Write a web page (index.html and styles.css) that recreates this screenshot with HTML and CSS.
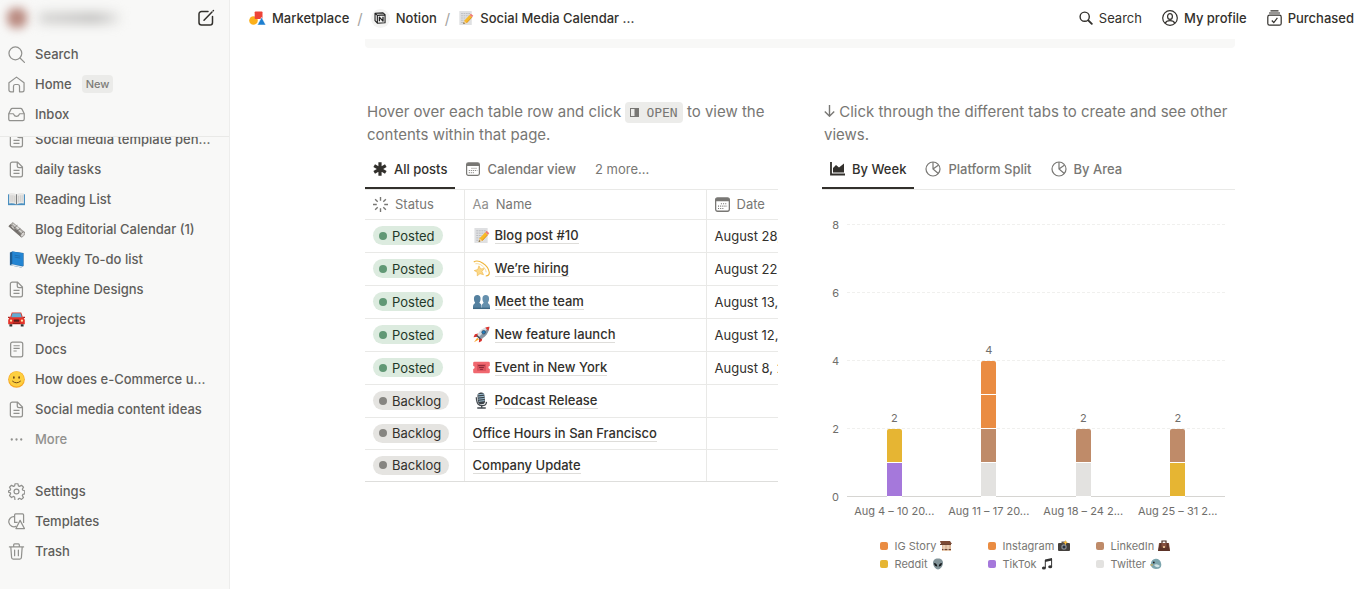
FILE: index.html
```html
<!DOCTYPE html>
<html lang="en">
  <head>
    <meta charset="utf-8" />
    <meta name="viewport" content="width=device-width, initial-scale=1" />
    <title>Social Media Calendar</title>
    <link rel="stylesheet" href="styles.css" />
  </head>
  <body>
    <!-- icon sprite -->
    <svg class="sprite" aria-hidden="true">
      <symbol id="page" viewBox="0 0 18 18">
        <path d="M4.500 1.200h5.600l5.200 5.200v8.400a2 2 0 0 1-2 2H4.500a2 2 0 0 1-2-2V3.200a2 2 0 0 1 2-2zM9.800 1.400v3.500a2 2 0 0 0 2 2h3.400M5.800 10h6.400M5.800 13h6.400" fill="none" stroke="currentColor" stroke-width="1.300" />
      </symbol>
      <symbol id="doc" viewBox="0 0 18 18">
        <rect x="2.800" y="1.200" width="12.800" height="15.600" rx="2" fill="none" stroke="currentColor" stroke-width="1.300" />
        <path d="M5.800 5h6.600M5.800 7.800h6.600M5.800 10.600h3.400" stroke="currentColor" stroke-width="1.100" />
      </symbol>
      <symbol id="memo" viewBox="0 0 18 18">
        <rect x="1.500" y="1" width="14" height="16" rx=".6" fill="#dfe0e2" />
        <path d="M3.500 4h10M3.500 6.500h9M3.500 9h6M3.500 11.500h5M3.500 14h4" stroke="#b4b6ba" stroke-width=".9" stroke-dasharray="2 .7" />
        <path d="M6 15.600l1-3.600 6-6.400 2.700 2.500-6 6.400z" fill="#f7b928" />
        <path d="M9.700 14.500l6-6.400" stroke="#d9860f" stroke-width=".9" />
        <path d="M13 5.600l1.500-1.500 2.700 2.500-1.500 1.500z" fill="#ef7b74" />
        <path d="M6 15.600l1-3.600 2.700 2.500z" fill="#f2cf9c" />
        <path d="M6 15.600l.5-1.700 1.200 1.200z" fill="#333" />
      </symbol>
      <symbol id="book-open" viewBox="0 0 18 18">
        <path d="M0 3.500h18V15H0z" fill="#4a8fc0" />
        <path d="M1.200 2.500q4-1 7.800 1 3.800-2 7.800-1v10.800q-4-.8-7.800 1-3.800-1.800-7.800-1z" fill="#e9e8e6" />
        <path d="M9 3.500v10.800" stroke="#777" />
        <path d="M3.200 4.500v7M5.200 4.500v7M7.200 5v7M11 5v7M13 4.500v7M15 4.500v7" stroke="#c6c5c2" stroke-width=".8" />
      </symbol>
      <symbol id="news" viewBox="0 0 18 18">
        <path d="M.5 5.500L5 1 17.500 11.500 14 17.300z" fill="#a5a29e" />
        <path d="M.5 5.500L14 17.300l-.4-4L2.500 3.500z" fill="#77736f" />
        <path d="M5 3l9.500 9M3.800 5.500l3 3M8 5l4 3.700" stroke="#dcdad7" stroke-width="1.100" />
        <path d="M6 8l4-3.500M9 11l4-3" stroke="#5d5a57" stroke-width=".8" />
        <ellipse cx="15.500" cy="14.300" rx="1.600" ry="3.200" transform="rotate(35 15.500 14.300)" fill="#d8d5d2" stroke="#7b7773" stroke-width=".7" />
      </symbol>
      <symbol id="book" viewBox="0 0 18 18">
        <path d="M2 1.500L4.500.5l12 1.500v14L14 17.500 2 15z" fill="#1c5d94" />
        <path d="M4.500.5L16 2.500V16L4.500 14z" fill="#2385d3" />
        <path d="M2 15l2.500-1L16 16.300l-2 1.200z" fill="#dce6ee" />
        <path d="M7 4.500l6 1M7 6.500l6 1" stroke="#1b67a7" stroke-width=".8" />
      </symbol>
      <symbol id="car" viewBox="0 0 18 18">
        <path d="M4 1.500h10l2 6H2z" fill="#d8382c" />
        <path d="M4.700 2.500h8.600l1.400 4.500H3.300z" fill="#62acd2" />
        <path d="M1.500 7h15L17.800 9.500V14H.2V9.500z" fill="#e5342a" />
        <path d="M0 6h2v1.500H0zM16 6h2v1.500h-2z" fill="#b12620" />
        <path d="M1.500 14h3v2.500h-3zM13.500 14h3v2.500h-3z" fill="#333" />
        <rect x="6" y="9" width="6" height="2.500" rx="1" fill="#581c1a" />
        <rect x="5" y="12.300" width="8" height="1.500" fill="#8f1f1a" />
        <circle cx="3.200" cy="10.200" r="1.200" fill="#ffe3a8" />
        <circle cx="14.800" cy="10.200" r="1.200" fill="#ffe3a8" />
      </symbol>
      <symbol id="smile" viewBox="0 0 18 18">
        <circle cx="9" cy="9" r="8.800" fill="#f6a623" />
        <circle cx="9" cy="8.500" r="8" fill="#fdcf3f" />
        <ellipse cx="6.200" cy="6.800" rx=".9" ry="1.300" fill="#6b4317" />
        <ellipse cx="11.800" cy="6.800" rx=".9" ry="1.300" fill="#6b4317" />
        <path d="M4.800 10.800q4.200 3.600 8.400 0" fill="none" stroke="#6b4317" stroke-linecap="round" />
      </symbol>
      <symbol id="dizzy" viewBox="0 0 18 18">
        <path d="M.8 2C6-1 16 5 17.200 13c.3 2.600-1.200 3.800-3.700 4" fill="none" stroke="#efb53c" stroke-width="1.200" />
        <path d="M2.500 4c5-1 10.500 3.500 11.500 9" fill="none" stroke="#f8dc93" />
        <path d="M6.300 6.200l1.800 3.200 3.700-.3-2.300 3 1.600 3.500-3.700-1.100-2.900 2.300V13l-3.200-1.800 3.700-1.100z" fill="#fbd98a" stroke="#eeb13d" stroke-width=".6" />
      </symbol>
      <symbol id="people" viewBox="0 0 18 18">
        <path d="M1 6a3.500 4 0 0 1 7 0c0 2-.6 3.300-1.300 4 .4 1.300 2.300 1.300 2.300 3.500V17H0v-3c0-2.300 2-2.500 2.300-4C1.500 9.300 1 8 1 6z" fill="#54809f" />
        <path d="M10 6a3.500 4 0 0 1 7 0c0 2-.6 3.300-1.300 4 .3 1.500 2.300 1.700 2.300 4v3H9.300v-3.500c0-2.200 1.700-2.200 2-3.500C10.600 9.300 10 8 10 6z" fill="#6590ad" />
        <path d="M0 15.500h18V17H0z" fill="#3f6885" />
      </symbol>
      <symbol id="rocket" viewBox="0 0 18 18">
        <path d="M5.500 8L2 8.800.5 12l4-.5zM10 12.500L9.200 16l-3 1.500.3-4z" fill="#d9302c" />
        <path d="M4.500 10C6 5 11 1 17.300.7 17 7 13 12 8 13.500z" fill="#d5dce1" />
        <path d="M8 13.500C13 12 17 7 17.300.7L6 12z" fill="#8796a3" />
        <path d="M13 1.900C14.400 1.200 15.800.8 17.300.7c-.1 1.500-.5 3-1.200 4.300z" fill="#df3831" />
        <circle cx="11.300" cy="6.600" r="1.900" fill="#217fc1" stroke="#34495e" stroke-width=".8" />
        <path d="M4.500 12.500l1.800 1.700L1 17.300z" fill="#fba52b" />
        <path d="M4 10l4 4" stroke="#3f4a56" stroke-width="1.500" />
      </symbol>
      <symbol id="ticket" viewBox="0 0 18 18">
        <path d="M1.500 3h15a1.300 1.300 0 0 1 1.300 1.300V7.500a1.500 1.500 0 0 0 0 3v3.200a1.300 1.300 0 0 1-1.300 1.300h-15A1.300 1.300 0 0 1 .2 13.700v-3.200a1.500 1.500 0 0 0 0-3V4.300A1.300 1.300 0 0 1 1.500 3z" fill="#f0686f" />
        <rect x="4.300" y="5.500" width="9.400" height="7" fill="#d8505b" />
        <path d="M5.500 7h7M6.500 9h5M7.500 11h3" stroke="#7d2130" stroke-width=".9" />
      </symbol>
      <symbol id="mic" viewBox="0 0 18 18">
        <path d="M3.500 5.500c.5 8 3 9 6.500 9s4-1.500 4.300-4" fill="none" stroke="#444b51" stroke-width="1.400" />
        <rect x="5" y=".5" width="7.500" height="12.500" rx="3.700" transform="rotate(-6 9 7)" fill="#3a4147" />
        <path d="M5.300 3l6.500-.8M5.400 5.300l6.800-.8M5.600 7.600l6.800-.8M6 9.900l6.300-.8" stroke="#9fc4d8" />
        <path d="M9.200 14v2.500M4.500 17h9" stroke="#444b51" stroke-width="1.500" />
      </symbol>
      <symbol id="calendar" viewBox="0 0 14 14">
        <rect x=".6" y=".9" width="12.800" height="12.400" rx="1.800" fill="none" stroke="currentColor" stroke-width="1.200" />
        <path d="M.6 4V2.500Q.6 1 2.200 1h9.600q1.600 0 1.600 1.500V4z" fill="currentColor" />
        <path d="M5.500 6.300h6M2.800 8.500h8.500M2.800 10.700h6" stroke="currentColor" stroke-dasharray="1 1" />
      </symbol>
      <symbol id="pie" viewBox="0 0 16 16">
        <circle cx="8" cy="8" r="7" fill="none" stroke="currentColor" stroke-width="1.200" />
        <path d="M8 1v7l5.300 4.500M8 8l5.300-3.800" fill="none" stroke="currentColor" stroke-width="1.200" />
      </symbol>
    </svg>

    <div class="app">
      <aside class="sidebar">
        <div class="workspace">
          <button class="switcher" aria-label="Workspace">
            <span class="avatar"></span>
            <span class="workspace-name"></span>
          </button>
          <button class="compose" aria-label="New page">
            <svg viewBox="0 0 18 18" width="18" height="18" fill="none" stroke="currentColor" stroke-width="1.500" stroke-linecap="round">
              <path d="M11 2.500H4.500A2.500 2.500 0 0 0 2 5v8.500A2.500 2.500 0 0 0 4.500 16H13a2.500 2.500 0 0 0 2.500-2.500V7.500" />
              <path d="M7 11.200L15 3M16.200 1.800l.2-.2" />
            </svg>
          </button>
        </div>

        <nav class="side-top">
          <a class="side-link" href="#">
            <svg class="side-icon" viewBox="0 0 18 18" fill="none" stroke="currentColor" stroke-width="1.300" stroke-linecap="round">
              <circle cx="7.800" cy="7.800" r="6.800" /><path d="M12.700 12.700l4.700 4.700" />
            </svg>
            Search
          </a>
          <a class="side-link" href="#">
            <svg class="side-icon" viewBox="0 0 18 18" fill="none" stroke="currentColor" stroke-width="1.300" stroke-linejoin="round">
              <path d="M1 7.200L9 1.200l8 6v7.500a2 2 0 0 1-2 2h-2.800V11a2 2 0 0 0-2-2H7.800a2 2 0 0 0-2 2v5.700H3a2 2 0 0 1-2-2z" />
            </svg>
            Home <span class="tag">New</span>
          </a>
          <a class="side-link" href="#">
            <svg class="side-icon" viewBox="0 0 18 18" fill="none" stroke="currentColor" stroke-width="1.300" stroke-linejoin="round">
              <path d="M.8 8.200L3.200 3.300Q3.600 2.500 4.600 2.500h8.800q1 0 1.400.8l2.400 4.900v5.600q0 1.700-1.700 1.700h-13Q.8 15.500.8 13.800z" />
              <path d="M.8 8.200h4.500q.7 0 .9.800Q6.800 11 9 11t2.800-2q.2-.8.900-.8h4.500" />
            </svg>
            Inbox
          </a>
        </nav>

        <nav class="side-pages">
          <a class="side-link" href="#"><svg class="side-icon"><use href="#page" /></svg>Social media template pen...</a>
          <a class="side-link" href="#"><svg class="side-icon"><use href="#page" /></svg>daily tasks</a>
          <a class="side-link" href="#"><svg class="side-icon"><use href="#book-open" /></svg>Reading List</a>
          <a class="side-link" href="#"><svg class="side-icon"><use href="#news" /></svg>Blog Editorial Calendar (1)</a>
          <a class="side-link" href="#"><svg class="side-icon"><use href="#book" /></svg>Weekly To-do list</a>
          <a class="side-link" href="#"><svg class="side-icon"><use href="#page" /></svg>Stephine Designs</a>
          <a class="side-link" href="#"><svg class="side-icon"><use href="#car" /></svg>Projects</a>
          <a class="side-link" href="#"><svg class="side-icon"><use href="#doc" /></svg>Docs</a>
          <a class="side-link" href="#"><svg class="side-icon"><use href="#smile" /></svg>How does e-Commerce u...</a>
          <a class="side-link" href="#"><svg class="side-icon"><use href="#page" /></svg>Social media content ideas</a>
          <button class="side-link more">
            <svg class="side-icon" viewBox="0 0 18 18" fill="currentColor"><circle cx="4" cy="9" r="1.200" /><circle cx="9" cy="9" r="1.200" /><circle cx="14" cy="9" r="1.200" /></svg>
            More
          </button>
        </nav>

        <nav class="side-bottom">
          <a class="side-link" href="#">
            <svg class="side-icon" viewBox="0 0 18 18" fill="none" stroke="currentColor" stroke-width="1.300" stroke-linejoin="round">
              <path d="M7.500.8h3l.5 2.200 1.300.6 2-1.200 2.100 2.100-1.200 2 .5 1.200 2 .5v3.400l-2 .5-.5 1.200 1.200 2-2.100 2.100-2-1.200-1.300.6-.5 2.200h-3L7 14.800l-1.300-.6-2 1.200-2.100-2.100 1.200-2-.5-1.200-1.700-.4V8.200l1.700-.5.500-1.200-1.200-2 2.100-2.100 2 1.200L7 3z" />
              <circle cx="9" cy="9" r="2.600" />
            </svg>
            Settings
          </a>
          <a class="side-link" href="#">
            <svg class="side-icon" viewBox="0 0 18 18" fill="none" stroke="currentColor" stroke-width="1.300" stroke-linejoin="round">
              <path d="M7 4a5.300 5.300 0 1 0 2 9.700" />
              <path d="M10.200 10H7V2q0-1 1-1h7.500q1 0 1 1v8.500" />
              <path d="M12.800 7.800l4.700 8.700H8.400z" />
            </svg>
            Templates
          </a>
          <a class="side-link" href="#">
            <svg class="side-icon" viewBox="0 0 18 18" fill="none" stroke="currentColor" stroke-width="1.300" stroke-linecap="round">
              <path d="M1.500 4.200h15M6 4V2q0-1 1-1h4q1 0 1 1v2M3 4.500l.8 10.900Q3.900 17 5.500 17h7q1.600 0 1.700-1.600L15 4.500M7 7.500v6M11 7.500v6" />
            </svg>
            Trash
          </a>
        </nav>
      </aside>

      <main class="main">
        <header class="topbar">
          <nav class="crumbs">
            <a class="crumb" href="#">
              <svg viewBox="0 0 17 16" width="17" height="16">
                <circle cx="4.500" cy="10.500" r="4.300" fill="#fcb01b" />
                <rect x="5.700" y="1.500" width="7.800" height="7.500" rx=".8" fill="#ed4337" />
                <path d="M12.600 7.200l4.200 7.800H8.400z" fill="#1e7fd0" stroke="#fff" stroke-width=".5" />
              </svg>
              Marketplace
            </a>
            <span class="slash">/</span>
            <a class="crumb" href="#">
              <span class="notion">
                <svg viewBox="0 0 14 14" width="12" height="12" fill="none" stroke="#222" stroke-width="1.300" stroke-linejoin="round">
                  <path d="M1.200 1.500L10.500 1l2.400 2v9.500l-9 .6-2.700-3zM3.900 4l9-.7M1.200 1.500L3.900 4v9" />
                  <path d="M6.300 10.800V6l4.200 4.600v-5" stroke-width="1.500" />
                </svg>
              </span>
              Notion
            </a>
            <span class="slash">/</span>
            <a class="crumb page-crumb" href="#"><svg width="16" height="16"><use href="#memo" /></svg>Social Media Calendar ...</a>
          </nav>
          <div class="actions">
            <a class="action regular" href="#">
              <svg viewBox="0 0 14 14" width="14" height="14" fill="none" stroke="currentColor" stroke-linecap="round">
                <circle cx="5.700" cy="5.700" r="4.600" stroke-width="1.400" /><path d="M9.300 9.300l3.500 3.500" stroke-width="1.900" />
              </svg>
              Search
            </a>
            <a class="action" href="#">
              <svg viewBox="0 0 16 16" width="16" height="16" fill="none" stroke="currentColor" stroke-width="1.200">
                <circle cx="8" cy="8" r="7.300" /><ellipse cx="8" cy="6.500" rx="2.400" ry="2.900" /><path d="M3.200 13.300q1-2.700 4.800-2.700t4.800 2.700" />
              </svg>
              My profile
            </a>
            <a class="action" href="#">
              <svg viewBox="0 0 15 16" width="15" height="16" fill="none" stroke="currentColor" stroke-width="1.200">
                <rect x=".8" y="5.200" width="13.400" height="10" rx="1.800" /><path d="M2 3h11M3.500.9h8M4.800 10.500l2 2 3.600-4.600" />
              </svg>
              Purchased
            </a>
          </div>
        </header>

        <div class="content">
          <div class="callout-end"></div>
          <div class="columns">
            <section class="column">
              <p class="intro">Hover over each table row and click <code class="open"><svg viewBox="0 0 9 9" width="9" height="9"><rect x=".5" y=".5" width="8" height="8" fill="none" stroke="currentColor" /><path d="M4.500 0H9v9H4.500z" fill="currentColor" /></svg>OPEN</code> to view the contents within that page.</p>
              <div class="tabs" role="tablist">
                <button class="tab active" role="tab" aria-selected="true">
                  <svg viewBox="0 0 14 14" width="14" height="14" stroke="currentColor" stroke-width="3.200"><path d="M7 .3v13.400M1.200 3.600l11.600 6.800M1.200 10.400l11.600-6.800" /></svg>
                  All posts
                </button>
                <button class="tab" role="tab"><svg width="14" height="14"><use href="#calendar" /></svg>Calendar view</button>
                <button class="tab tab-more">2 more...</button>
              </div>
              <div class="table-wrap">
                <table class="posts">
                  <colgroup>
                    <col class="col-status" />
                    <col class="col-name" />
                    <col class="col-date" />
                  </colgroup>
                  <thead>
                    <tr>
                      <th>
                        <span class="head">
                          <svg viewBox="0 0 14 14" width="15" height="15" stroke="currentColor" stroke-width="1.300"><path d="M7 0v3.500M7 10.500V14M0 7h3.500M10.500 7H14M2 2l2.400 2.400M9.600 9.600L12 12M2 12l2.400-2.400M9.600 4.400L12 2" /></svg>
                          Status
                        </span>
                      </th>
                      <th><span class="head"><span class="aa">Aa</span>Name</span></th>
                      <th><span class="head"><svg width="15" height="15"><use href="#calendar" /></svg>Date</span></th>
                    </tr>
                  </thead>
                  <tbody>
                    <tr>
                      <td><span class="pill posted">Posted</span></td>
                      <td><span class="name"><svg class="emoji"><use href="#memo" /></svg><a href="#">Blog post #10</a></span></td>
                      <td>August 28, 2024</td>
                    </tr>
                    <tr>
                      <td><span class="pill posted">Posted</span></td>
                      <td><span class="name"><svg class="emoji"><use href="#dizzy" /></svg><a href="#">We’re hiring</a></span></td>
                      <td>August 22, 2024</td>
                    </tr>
                    <tr>
                      <td><span class="pill posted">Posted</span></td>
                      <td><span class="name"><svg class="emoji"><use href="#people" /></svg><a href="#">Meet the team</a></span></td>
                      <td>August 13, 2024</td>
                    </tr>
                    <tr>
                      <td><span class="pill posted">Posted</span></td>
                      <td><span class="name"><svg class="emoji"><use href="#rocket" /></svg><a href="#">New feature launch</a></span></td>
                      <td>August 12, 2024</td>
                    </tr>
                    <tr>
                      <td><span class="pill posted">Posted</span></td>
                      <td><span class="name"><svg class="emoji"><use href="#ticket" /></svg><a href="#">Event in New York</a></span></td>
                      <td>August 8, 2024</td>
                    </tr>
                    <tr>
                      <td><span class="pill">Backlog</span></td>
                      <td><span class="name"><svg class="emoji"><use href="#mic" /></svg><a href="#">Podcast Release</a></span></td>
                      <td></td>
                    </tr>
                    <tr class="plain">
                      <td><span class="pill">Backlog</span></td>
                      <td><span class="name"><a href="#">Office Hours in San Francisco</a></span></td>
                      <td></td>
                    </tr>
                    <tr class="plain">
                      <td><span class="pill">Backlog</span></td>
                      <td><span class="name"><a href="#">Company Update</a></span></td>
                      <td></td>
                    </tr>
                  </tbody>
                </table>
              </div>
            </section>

            <section class="column">
              <p class="intro"><svg viewBox="0 0 11 12" width="11" height="12" fill="none" stroke="currentColor" stroke-width="1.400"><path d="M5.500 0v11M.8 6.500l4.700 4.700 4.700-4.700" /></svg> Click through the different tabs to create and see other views.</p>
              <div class="tabs" role="tablist">
                <button class="tab active" role="tab" aria-selected="true">
                  <svg viewBox="0 0 15 14" width="15" height="14"><path d="M1 0v12.500h14" fill="none" stroke="currentColor" stroke-width="1.800" /><path d="M3 10.500V6l3-3 3 2.500 5-4v9z" fill="currentColor" /></svg>
                  By Week
                </button>
                <button class="tab" role="tab"><svg width="16" height="16"><use href="#pie" /></svg>Platform Split</button>
                <button class="tab" role="tab"><svg width="16" height="16"><use href="#pie" /></svg>By Area</button>
              </div>

              <div class="chart">
                <div class="y-axis"><span>8</span><span>6</span><span>4</span><span>2</span><span>0</span></div>
                <div class="grid-lines"><i></i><i></i><i></i><i></i></div>
                <div class="bars">
                  <div class="bar"><b>2</b><i class="yellow"></i><i class="purple"></i></div>
                  <div class="bar"><b>4</b><i class="orange"></i><i class="orange"></i><i class="brown"></i><i class="gray"></i></div>
                  <div class="bar"><b>2</b><i class="brown"></i><i class="gray"></i></div>
                  <div class="bar"><b>2</b><i class="brown"></i><i class="yellow"></i></div>
                </div>
                <div class="x-axis">
                  <span>Aug 4 – 10 20...</span><span>Aug 11 – 17 20...</span><span>Aug 18 – 24 2...</span><span>Aug 25 – 31 2...</span>
                </div>
              </div>

              <ul class="legend">
                <li><i class="orange"></i>IG Story
                  <svg viewBox="0 0 12 12" width="12" height="12"><path d="M0 1h10l2 3H1z" fill="#7b4a35" /><path d="M2 4h9v7H2z" fill="#dcb99c" /><path d="M0 4.500h11M2 9.500h9" stroke="#6a4331" /><path d="M4 5v6M8 5v6" stroke="#f3dfc9" /></svg>
                </li>
                <li><i class="orange"></i>Instagram
                  <svg viewBox="0 0 12 12" width="12" height="12"><rect y="3" width="12" height="8" rx="1" fill="#44403d" /><rect x="3.500" y="1.500" width="5" height="2" fill="#5e5954" /><circle cx="6" cy="7" r="2.700" fill="#8b8f95" /><circle cx="6" cy="7" r="1.500" fill="#27313f" /><path d="M7.500 0l.8 2 1.700.5-1.700.8-.8 2-.8-2L5 2.500 6.700 2z" fill="#f9bd3e" /></svg>
                </li>
                <li><i class="brown"></i>LinkedIn
                  <svg viewBox="0 0 12 12" width="12" height="12"><path d="M4 3V1h4v2" fill="none" stroke="#4a2f26" stroke-width="1.200" /><path d="M1 3h10l1 8H0z" fill="#85503f" /><path d="M0 11l2-8h1.500v4.500h5V3H10l2 8z" fill="#5c3328" /><rect x="5" y="6" width="2" height="2" fill="#e0b88b" /></svg>
                </li>
                <li><i class="yellow"></i>Reddit
                  <svg viewBox="0 0 12 12" width="12" height="12"><path d="M6 .5c3.500 0 5 2 5 4.500 0 3-3 6.500-5 6.500S1 8 1 5C1 2.500 2.500.5 6 .5z" fill="#829398" /><path d="M2 5q3 .3 3.300 3.500Q2.300 8.500 2 5zM10 5q-3 .3-3.300 3.500Q9.700 8.500 10 5z" fill="#15191b" /></svg>
                </li>
                <li><i class="purple"></i>TikTok
                  <svg viewBox="0 0 12 12" width="12" height="12" fill="#333"><path d="M4 1.500L11 0v2.500L4 4z" /><path d="M4.300 2v8M10.600 1v7.500" stroke="#333" /><ellipse cx="2.900" cy="10" rx="2" ry="1.500" /><ellipse cx="9.200" cy="8.800" rx="2" ry="1.500" /></svg>
                </li>
                <li><i class="gray"></i>Twitter
                  <svg viewBox="0 0 12 12" width="12" height="12"><path d="M1 5.500A5 4.500 0 0 1 11 5q1.500 6-5 6-3.500 0-5-3L0 7z" fill="#7ca5ae" /><path d="M4 7q3-2 6 1-3 3-6-1z" fill="#d2e4e7" /><circle cx="3.800" cy="4.500" r=".9" fill="#222" /><path d="M0 7l2.500-1v1.800z" fill="#e7aa3c" /></svg>
                </li>
              </ul>
            </section>
          </div>
        </div>
      </main>
    </div>
  </body>
</html>
```

FILE: styles.css
```css
*,
*::before,
*::after {
  margin: 0;
  padding: 0;
  box-sizing: border-box;
}

body {
  font-family: Inter, "Liberation Sans", sans-serif;
  font-size: 13px;
  color: #32302c;
  background: #fff;
}

a {
  color: inherit;
  text-decoration: none;
}

button {
  font: inherit;
  color: inherit;
  background: none;
  border: none;
  cursor: pointer;
}

svg {
  flex-shrink: 0;
}

.sprite {
  display: none;
}

.app {
  display: flex;
  min-height: 100vh;
}

/* sidebar */
.sidebar {
  width: 230px;
  flex-shrink: 0;
  background: #f8f8f7;
  border-right: 1px solid #ededec;
  color: #5f5e5b;
  font-weight: 500;
}

.workspace {
  display: flex;
  align-items: center;
  justify-content: space-between;
  height: 39px;
  padding: 0 14px 3px 7px;
}

.switcher {
  display: flex;
  align-items: center;
  gap: 12px;
}

.avatar {
  width: 20px;
  height: 20px;
  border-radius: 8px;
  background: #b98a80;
  filter: blur(5px);
}

.workspace-name {
  width: 80px;
  height: 10px;
  background: linear-gradient(90deg, #d0cfcd, #b9b8b6 70%, #e4e4e2);
  filter: blur(6px);
}

.compose {
  display: flex;
  color: #32302c;
}

.side-top {
  padding-bottom: 7px;
  border-bottom: 1px solid #e9e9e7;
}

.side-link {
  display: flex;
  align-items: center;
  gap: 10px;
  width: 100%;
  height: 30px;
  padding: 0 8px;
  line-height: 18px;
  white-space: nowrap;
}

.side-icon {
  width: 17px;
  height: 17px;
  color: #91918e;
}

.tag {
  padding: 0 4px;
  border-radius: 4px;
  background: #ebebe9;
  color: #7d7c78;
  font-size: 11px;
}

.side-pages {
  overflow: hidden;
}

/* list is scrolled a little under the top links */
.side-pages .side-link:first-child {
  margin-top: -13px;
}

.more {
  color: #91918e;
}

.side-bottom {
  padding-top: 22px;
}

/* top bar */
.main {
  flex: 1;
  min-width: 0;
}

.topbar {
  display: flex;
  align-items: center;
  justify-content: space-between;
  height: 39px;
  padding: 0 12px 3px 19px;
  font-weight: 500;
  white-space: nowrap;
}

.crumbs,
.crumb,
.actions,
.action {
  display: flex;
  align-items: center;
}

.crumbs {
  gap: 8px;
}

.crumb,
.action {
  gap: 6px;
}

.slash {
  color: #a5a4a1;
  font-size: 15px;
  font-weight: 400;
}

.notion {
  display: flex;
  align-items: center;
  justify-content: center;
  width: 19px;
  height: 19px;
  border-radius: 50%;
  background: #f4f4f3;
}

.actions {
  gap: 20px;
}

.regular {
  font-weight: 400;
}

/* page */
.content {
  padding: 0 131px 0 135px;
}

.callout-end {
  height: 9px;
  border-radius: 0 0 4px 4px;
  background: #f8f8f7;
}

.columns {
  display: grid;
  grid-template-columns: minmax(0, 1fr) minmax(0, 1fr);
  gap: 44px;
  padding-top: 52px;
}

.intro {
  padding: 0 2px;
  color: #787774;
  font-size: 15px;
  line-height: 23px;
}

.open {
  padding: 3px 5px;
  border-radius: 4px;
  background: #ececea;
  font-family: "DejaVu Sans Mono", monospace;
  font-size: 13px;
  line-height: 1;
}

.open svg {
  margin-right: 7px;
}

.tabs {
  display: flex;
  gap: 3px;
  height: 44px;
  padding-top: 5px;
  border-bottom: 1px solid #e9e9e7;
}

.tab {
  display: flex;
  align-items: center;
  gap: 7px;
  height: 38px;
  padding: 0 8px;
  border-bottom: 2px solid transparent;
  color: #787774;
  font-weight: 500;
  white-space: nowrap;
}

.active {
  border-color: #32302c;
  color: #32302c;
}

.tab-more {
  font-weight: 400;
}

/* posts table */
.table-wrap {
  overflow: hidden;
}

.posts {
  width: 472px;
  table-layout: fixed;
  border-collapse: collapse;
}

.col-status {
  width: 99px;
}

.col-name {
  width: 242px;
}

.col-date {
  width: 131px;
}

.posts th,
.posts td {
  height: 33px;
  padding: 0 8px;
  border-bottom: 1px solid #e9e9e7;
  border-right: 1px solid #e9e9e7;
  text-align: left;
  white-space: nowrap;
}

.posts th {
  height: 29px;
  color: #787774;
  font-weight: 400;
}

.posts .plain td {
  height: 32px;
}

.posts tr:last-child td {
  border-bottom-color: #dededc;
}

.head,
.name {
  display: flex;
  align-items: center;
}

.head {
  gap: 7px;
}

.aa {
  color: #91918e;
}

.name {
  gap: 5px;
  font-weight: 500;
}

.name a {
  border-bottom: 1px solid #deddda;
  line-height: 16px;
}

.emoji {
  width: 17px;
  height: 17px;
}

.pill {
  display: inline-flex;
  align-items: center;
  gap: 5px;
  height: 19px;
  padding: 0 8px 0 6px;
  border-radius: 10px;
  background: #e5e4e1;
  vertical-align: middle;
}

.pill::before {
  content: "";
  width: 8px;
  height: 8px;
  border-radius: 50%;
  background: #868581;
}

.posted {
  background: #dcebdf;
  color: #1f3829;
}

.posted::before {
  background: #619875;
}

/* chart */
.chart {
  display: grid;
  grid-template-columns: 17px 1fr;
  column-gap: 8px;
  padding: 34px 10px 0 0;
  color: #6f6e6b;
  font-size: 11px;
}

.y-axis {
  display: flex;
  flex-direction: column;
  text-align: right;
}

.y-axis span {
  height: 68px;
  line-height: 2px;
}

.y-axis span:last-child {
  height: 0;
}

.grid-lines,
.bars {
  grid-column: 2;
  grid-row: 1;
}

.grid-lines {
  border-bottom: 1px solid #d6d5d2;
}

.grid-lines i {
  display: block;
  height: 68px;
  border-top: 1px dashed #f0f0ee;
}

.bars,
.x-axis {
  display: grid;
  grid-template-columns: repeat(4, 1fr);
}

.bar {
  display: flex;
  flex-direction: column;
  align-items: center;
  justify-content: flex-end;
}

.bar b {
  margin-bottom: 3px;
  font-weight: 400;
  line-height: 16px;
}

.bar i {
  width: 15px;
  height: 34px;
  border-bottom: 1px solid #fff;
}

.bar b + i {
  border-radius: 2px 2px 0 0;
}

.x-axis {
  grid-column: 2;
  padding-top: 6px;
  line-height: 16px;
  text-align: center;
  white-space: nowrap;
}

.orange {
  background: #ea8c42;
}

.brown {
  background: #bf8b69;
}

.yellow {
  background: #e6b533;
}

.purple {
  background: #a578db;
}

.gray {
  background: #e3e2e0;
}

.legend {
  display: grid;
  grid-template-columns: repeat(3, 108px);
  justify-content: center;
  padding: 18px 0 16px 26px;
  list-style: none;
  color: #787774;
  font-size: 11px;
}

.legend li {
  display: flex;
  align-items: center;
  gap: 4px;
  height: 18px;
}

.legend i {
  width: 8px;
  height: 8px;
  margin-right: 3px;
  border-radius: 2px;
}
```
